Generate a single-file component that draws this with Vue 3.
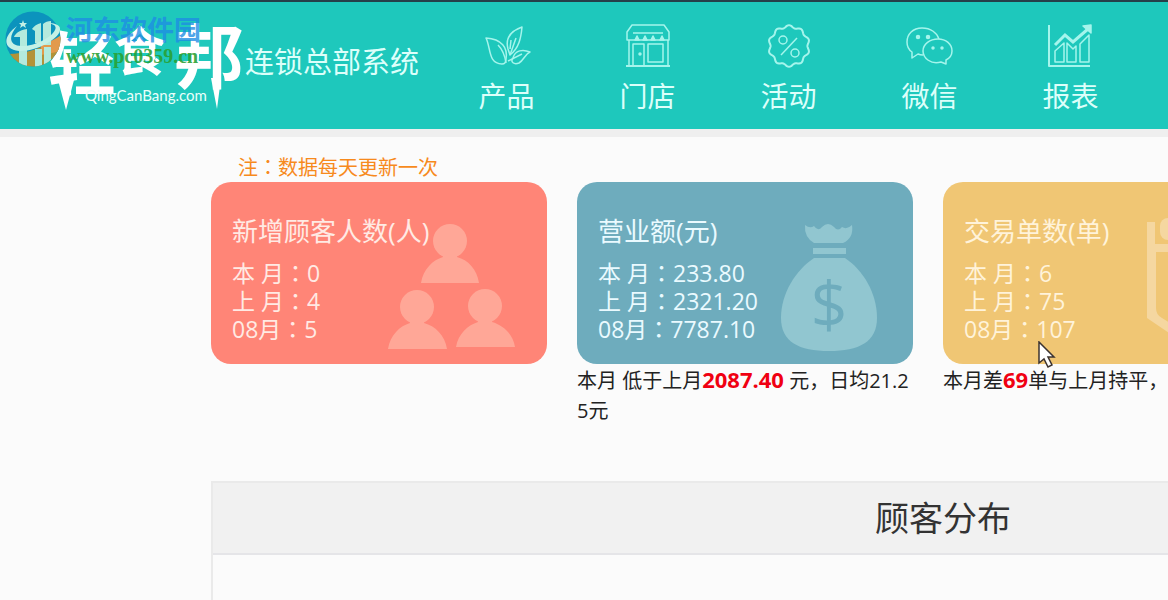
<script setup>
const badge = Array.from({ length: 120 }, (_, i) => {
  const t = (i / 120) * Math.PI * 2
  const r = 19.6 + 1.2 * Math.cos(t * 10)
  return `${(24 + r * Math.sin(t)).toFixed(2)},${(23 - r * Math.cos(t)).toFixed(2)}`
}).join(' ')

const nav = [
  { id: 'product', label: '产品' },
  { id: 'store', label: '门店' },
  { id: 'promo', label: '活动' },
  { id: 'wechat', label: '微信' },
  { id: 'report', label: '报表' },
]

const cards = [
  {
    id: 'guests',
    title: '新增顾客人数(人)',
    rows: [['本 月', '0'], ['上 月', '4'], ['08月', '5']],
  },
  {
    id: 'revenue',
    title: '营业额(元)',
    rows: [['本 月', '233.80'], ['上 月', '2321.20'], ['08月', '7787.10']],
    note: ['本月 低于上月', '2087.40', ' 元，日均21.25元'],
  },
  {
    id: 'orders',
    title: '交易单数(单)',
    rows: [['本 月', '6'], ['上 月', '75'], ['08月', '107']],
    note: ['本月差', '69', '单与上月持平，'],
  },
]
</script>

<template>
  <div class="page">
    <header class="top">
      <div class="brand">
        <svg class="logo" viewBox="0 0 245 127" role="img" aria-label="轻食邦">
          <g class="logo-name">
            <text x="48" y="87" font-size="68">轻</text>
            <text x="114" y="69" font-size="52">食</text>
            <text x="174" y="81" font-size="70">邦</text>
          </g>
          <path d="M58 78H74L66 108zM211 76H221L217 107z" fill="#fff" />
          <text class="logo-site" x="85" y="99">QingCanBang.com</text>
        </svg>
        <span class="system">连锁总部系统</span>
      </div>
      <nav class="nav">
        <a v-for="n in nav" :key="n.id" href="#" class="nav-item">
          <svg class="nav-icon" viewBox="0 0 48 48" aria-hidden="true">
            <g v-if="n.id === 'product'">
              <path d="M3 15C8 25 5 41 19 41C22 41 23 39 23 36C25 25 19 16 3 15z" />
              <path d="M15 22C20 27 22 33 23 40" />
              <path d="M39 4C28 8 22 15 25 26L27 32C36 25 38 15 39 4z" />
              <path d="M33 15 27 32M28 17 27 26" />
              <path d="M47 29C40 26 32 27 30 35C27 39 31 42 36 40C41 37 42 31 47 29z" />
              <path d="M39 31 25 38" />
            </g>
            <g v-else-if="n.id === 'store'">
              <path d="M8 2h32l5 7v8H3V9zM9 10h30M5 17v26M44 17v26M9 43V21h11v22M24 21h15v18H24z" />
              <path d="M11 17l2-4 2 4zM19 17l2-4 2 4zM27 17l2-4 2 4zM36 17l2-4 2 4z" class="solid" />
              <circle cx="16" cy="31" r="1" class="solid" />
              <path d="M2 43h44" class="bold" />
            </g>
            <g v-else-if="n.id === 'promo'">
              <polygon :points="badge" class="bold" />
              <circle cx="18" cy="17" r="4" />
              <circle cx="30" cy="30" r="4" />
              <path d="M32 15 16 32" />
            </g>
            <g v-else-if="n.id === 'wechat'">
              <path d="M17 32Q14 32 12 31L6 35V29C3 27 1 23 1 19C1 11 7 5 16 5C25 5 31 10 33 16" />
              <path d="M32 16C40 16 46 21 46 28C46 32 44 35 40 37V41L35 39C25 42 17 35 17 28C17 21 24 16 32 16z" />
              <circle cx="12" cy="14" r="1.5" class="solid" />
              <circle cx="22" cy="14" r="1.5" class="solid" />
              <circle cx="27" cy="25" r="1" class="solid" />
              <circle cx="36" cy="25" r="1" class="solid" />
            </g>
            <g v-else>
              <path d="M2 2v41h41" class="bold" />
              <path d="M8 39V28l9-8v19zM20 39V20l6 6 3-3v16zM33 39V21l9-9v27z" />
              <path d="M8 22 18 12l8 7L41 6" class="heavy" />
              <path d="M36 3l8-1v8z" class="solid" />
            </g>
          </svg>
          <span class="nav-label">{{ n.label }}</span>
        </a>
      </nav>
      <div class="watermark">
        <svg class="mark" viewBox="0 0 58 58" aria-hidden="true">
          <defs>
            <clipPath id="disc"><circle cx="28" cy="28" r="27.5" /></clipPath>
          </defs>
          <g clip-path="url(#disc)">
            <path d="M0 0H58V58H0z" fill="#0c93bd" />
            <path d="M0 43C15 44 40 38 58 24V58H0z" fill="#b39338" />
            <path d="M36 34C45 31 52 27 58 23V40L36 44z" fill="#e29a4c" />
            <path d="M9 26C10 23 14 19 22 18V56H14V38H11V35H15V26zM27 18C29 15 32 13 36 12V32H30V20zM38 13C40 11 43 10 46 10V34H38zM30 38h7v18h-7zM39 36h7v20h-7z" fill="#b4eadd" />
          </g>
          <path fill-rule="evenodd" d="M12 15C-2 25-3 38 14 40C32 41 56 27 55 18C55 13 48 12 42 12C49 13 52 15 50 19C46 27 30 35 17 35C4 35 3 26 12 15z" fill="#c4f1e6" />
          <path d="M18 9l1 3h3l-2 2 1 3-3-2-3 2 1-3-2-2h3z" fill="#c4f1e6" />
        </svg>
        <div class="mark-text">
          <span class="mark-name">河东软件园</span>
          <span class="mark-site">www.pc0359.cn</span>
        </div>
      </div>
    </header>

    <main class="content">
      <p class="tip">注<span class="colon">：</span>数据每天更新一次</p>
      <div class="cards">
        <section v-for="c in cards" :key="c.id" class="col">
          <div class="card" :class="c.id">
            <svg class="art" viewBox="0 0 336 182" aria-hidden="true">
              <g v-if="c.id === 'guests'" fill="#ffa797">
                <circle cx="239" cy="59" r="17" />
                <path d="M210 101C212 87 222 78 232 75V70H246V75C257 78 266 87 268 101z" />
                <circle cx="206" cy="125" r="17" />
                <path d="M177 167C179 153 189 144 199 141V136H213V141C224 144 234 153 236 167z" />
                <circle cx="274" cy="124" r="17" />
                <path d="M245 165C247 152 257 143 267 140V135H281V140C292 143 302 152 304 165z" />
              </g>
              <g v-else-if="c.id === 'revenue'" fill="#91c6d0">
                <path d="M228 43q5 4 9 1q4 6 8 1q6-6 12 0q4 5 8 0q5 3 10-2q2 13-9 18H237q-10-6-9-18z" />
                <path d="M236 66h33v6h-33z" />
                <path d="M237 76H268C286 88 300 111 300 136C300 160 282 169 252 169C222 169 204 160 204 136C204 111 219 88 237 76z" />
                <text x="252" y="146" class="dollar">$</text>
              </g>
              <g v-else fill="#f5d7a0">
                <path fill-rule="evenodd" d="M204 40h8v22h96V40h8v96l-56 38-56-38zM213 70v56q0 7 6 10l41 26 41-26q6-3 6-10V70z" />
                <rect x="217" y="36" width="20" height="22" rx="8" />
              </g>
            </svg>
            <h2 class="card-title">{{ c.title }}</h2>
            <p v-for="r in c.rows" :key="r[0]" class="row">{{ r[0] }}<span class="colon">：</span>{{ r[1] }}</p>
          </div>
          <p v-if="c.note" class="note">{{ c.note[0] }}<strong>{{ c.note[1] }}</strong>{{ c.note[2] }}</p>
        </section>
      </div>
      <section class="panel">
        <h2 class="panel-title">顾客分布</h2>
        <div class="panel-body"></div>
      </section>
    </main>

    <svg class="cursor" viewBox="0 0 18 28" aria-hidden="true">
      <path d="M1 1V22L6 18L10 26L14 24L10 16H16z" fill="#fff" stroke="#3b3331" stroke-width="1.5" />
    </svg>
  </div>
</template>

<style>
body {
  margin: 0;
  background: #fbfbfb;
}
</style>

<style scoped>
.page {
  position: relative;
  min-height: 100vh;
  overflow: hidden;
  font-family: "Open Sans", "Noto Sans CJK SC", sans-serif;
  color: #222;
}
h2,
p {
  margin: 0;
  font-weight: 400;
}
.colon {
  font-family: "Noto Sans CJK TC", sans-serif;
  line-height: 20px;
}
.top {
  position: relative;
  display: flex;
  background: #1ec8bc;
  border-top: 2px solid #25404a;
  border-bottom: 8px solid #efefef;
}
.brand {
  display: flex;
  flex: none;
  align-items: center;
  width: 436px;
}
.logo {
  flex: none;
  width: 245px;
  height: 127px;
}
.logo-name {
  font-family: "Noto Sans CJK SC", sans-serif;
  font-weight: 700;
  fill: #fff;
}
.logo-site {
  font-family: Lato, sans-serif;
  font-size: 15px;
  fill: #e9fffb;
}
.system {
  padding-bottom: 8px;
  font-size: 29px;
  line-height: 40px;
  color: #dcfffa;
}
.nav {
  display: flex;
}
.nav-item {
  display: flex;
  flex-direction: column;
  align-items: center;
  width: 141px;
  padding-top: 21px;
  color: #dcfffa;
  text-decoration: none;
}
.nav-icon {
  width: 48px;
  height: 48px;
  fill: none;
  stroke: #a5f5ec;
  stroke-width: 1.5;
  stroke-linejoin: round;
}
.nav-icon .bold {
  stroke-width: 2;
}
.nav-icon .heavy {
  stroke-width: 3;
  stroke-linejoin: miter;
}
.nav-icon .solid {
  fill: #a5f5ec;
}
.nav-label {
  margin-top: 5px;
  font-size: 28px;
  line-height: 40px;
}
.watermark {
  position: absolute;
  top: 9px;
  left: 5px;
  display: flex;
  gap: 3px;
}
.mark {
  width: 58px;
  height: 58px;
}
.mark-text {
  display: flex;
  flex-direction: column;
  padding-top: 5px;
}
.mark-name {
  font-size: 27px;
  font-weight: 700;
  line-height: 28px;
  color: rgba(30, 140, 228, 0.8);
}
.mark-site {
  font-family: "Liberation Serif", serif;
  font-size: 20px;
  font-weight: 700;
  line-height: 24px;
  color: rgba(40, 160, 50, 0.9);
}
.content {
  min-width: 1464px;
  margin-left: 211px;
  padding-top: 17px;
}
.tip {
  padding-left: 27px;
  font-size: 20px;
  line-height: 28px;
  color: #f78a1d;
}
.cards {
  display: grid;
  grid-template-columns: repeat(4, 1fr);
  margin-bottom: 55px;
}
.col {
  padding-right: 30px;
}
.card {
  position: relative;
  padding: 31px 21px 21px;
  border-radius: 20px;
}
.guests {
  background: #ff8577;
  color: #ffeae4;
}
.revenue {
  background: #6eacbd;
  color: #eafaff;
}
.orders {
  background: #f0c674;
  color: #fff3da;
}
.art {
  position: absolute;
  top: 0;
  left: 0;
  width: 336px;
  height: 182px;
}
.dollar {
  font-size: 64px;
  text-anchor: middle;
  fill: #6eacbd;
}
.card-title {
  position: relative;
  margin-bottom: 10px;
  font-size: 26px;
  line-height: 36px;
}
.row {
  position: relative;
  font-size: 23px;
  line-height: 28px;
}
.note {
  margin-top: 2px;
  font-size: 20px;
  line-height: 30px;
  word-break: break-all;
}
.note strong {
  font-size: 22px;
  line-height: 20px;
  color: #f00012;
}
.panel {
  border: 2px solid #eaeaea;
}
.panel-title {
  background: #f1f1f1;
  border-bottom: 2px solid #e5e5e8;
  font-size: 34px;
  line-height: 70px;
  text-align: center;
  color: #333;
}
.panel-body {
  min-height: 60px;
}
.cursor {
  position: absolute;
  top: 341px;
  left: 1038px;
  width: 18px;
  height: 28px;
}
</style>
